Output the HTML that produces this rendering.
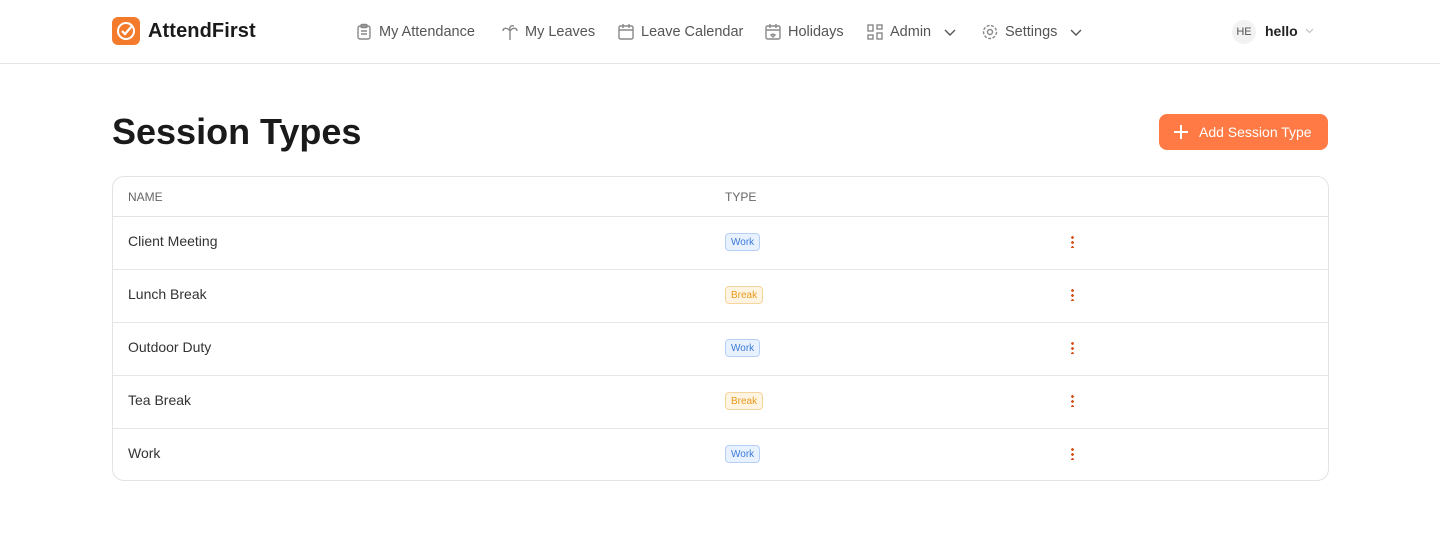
<!DOCTYPE html>
<html><head><style>
*{box-sizing:border-box;margin:0;padding:0}
body{width:1440px;height:550px;background:#fff;font-family:"Liberation Sans",sans-serif;color:#1f1f1f;overflow:hidden;position:relative}
.hdr{position:absolute;left:0;top:0;width:1440px;height:64px;border-bottom:1px solid #e5e5e5}
.logo{position:absolute;left:112px;top:17px;width:28px;height:28px;background:#f47b2c;border-radius:6px}
.brand{position:absolute;left:148px;top:20px;font-size:20px;font-weight:bold;color:#1a1a1a;letter-spacing:0.1px}
.nav{position:absolute;top:23px;font-size:14.5px;color:#555;display:flex;align-items:center;gap:6px}
.nav svg{width:18px;height:18px;fill:none;stroke:#888;stroke-width:1.4}
.av{position:absolute;left:1232px;top:20px;width:24px;height:24px;border-radius:12px;background:#f2f2f2;font-size:11px;color:#555;text-align:center;line-height:24px;font-weight:normal}
h1{position:absolute;left:112px;top:111px;font-size:36px;font-weight:bold;color:#1a1a1a}
.btn{position:absolute;left:1159px;top:114px;width:169px;height:36px;background:#ff7a45;border-radius:8px;color:#fff;font-size:14px;line-height:36px;padding-left:40px}
.btn:before{content:"";position:absolute;left:15px;top:17px;width:14px;height:1.6px;background:#fff}
.btn:after{content:"";position:absolute;left:21px;top:11px;width:1.6px;height:14px;background:#fff}
.tbl{position:absolute;left:112px;top:176px;width:1217px;height:305px;border:1px solid #e3e3e3;border-radius:12px;overflow:hidden}
.th{height:40px;border-bottom:1px solid #e3e3e3;font-size:12px;color:#666;position:relative}
.th span{position:absolute;top:13px}
.row{height:53px;border-bottom:1px solid #e6e6e6;position:relative;font-size:14px;color:#333}
.row:last-child{border-bottom:none}
.nm{position:absolute;left:15px;top:16px}
.b{position:absolute;left:612px;top:16px;height:18px;border-radius:4px;font-size:10px;display:flex;align-items:center;padding:0 5px}
.w{background:#e8f1ff;border:1px solid #b6d0f5;color:#3c7bd6}
.k{background:#fff4e2;border:1px solid #f5d59e;color:#e99a1d}
.dots{position:absolute;left:958px;top:18px;width:3px;height:13px;background:radial-gradient(circle,#d4541a 1.3px,transparent 1.5px) 0 0/3px 5px repeat-y}
</style></head><body>
<div class="hdr">
<div class="logo"><svg width="28" height="28" viewBox="0 0 28 28"><circle cx="14" cy="14" r="8" fill="none" stroke="#fff" stroke-width="2"/><path d="M10 14l3 3 7-8" fill="none" stroke="#fff" stroke-width="2.2"/></svg></div>
<div class="brand">AttendFirst</div>
<div class="nav" style="left:355px"><svg viewBox="0 0 18 18"><rect x="3" y="3" width="12" height="13" rx="2"/><rect x="6" y="1.5" width="6" height="3" rx="1"/><path d="M6 8h6M6 11h6"/></svg>My Attendance</div>
<div class="nav" style="left:501px"><svg viewBox="0 0 18 18"><path d="M9 8v9M9 8C6 4 2 5 2 8M9 8c3-4 7-3 7 0M9 8C8 4 10 2 13 3"/></svg>My Leaves</div>
<div class="nav" style="left:617px"><svg viewBox="0 0 18 18"><rect x="2" y="3" width="14" height="13" rx="1.5"/><path d="M2 7h14M6 1v4M12 1v4"/></svg>Leave Calendar</div>
<div class="nav" style="left:764px"><svg viewBox="0 0 18 18"><rect x="2" y="3" width="14" height="13" rx="1.5"/><path d="M2 7h14M6 1v4M12 1v4M9 14l-2-2 2-1 2 1z"/></svg>Holidays</div>
<div class="nav" style="left:866px"><svg viewBox="0 0 18 18"><rect x="2" y="2" width="5" height="6"/><rect x="11" y="2" width="5" height="4"/><rect x="2" y="12" width="5" height="4"/><rect x="11" y="10" width="5" height="6"/></svg>Admin <svg viewBox="0 0 18 18" style="stroke:#555;margin-left:4px"><path d="M4 7l5 5 5-5"/></svg></div>
<div class="nav" style="left:981px"><svg viewBox="0 0 18 18"><circle cx="9" cy="9" r="2.5"/><circle cx="9" cy="9" r="6.5" stroke-dasharray="3 1.5"/></svg>Settings <svg viewBox="0 0 18 18" style="stroke:#555;margin-left:4px"><path d="M4 7l5 5 5-5"/></svg></div>
<div class="av">HE</div>
<div style="position:absolute;left:1265px;top:23px;font-size:14px;font-weight:bold;color:#222">hello</div>
<svg style="position:absolute;left:1305px;top:28px" width="9" height="6"><path d="M1 1l3.5 3.5L8 1" fill="none" stroke="#bbb"/></svg>
</div>
<h1>Session Types</h1>
<div class="btn">Add Session Type</div>
<div class="tbl">
<div class="th"><span style="left:15px">NAME</span><span style="left:612px">TYPE</span></div>
<div class="row"><span class="nm">Client Meeting</span><span class="b w">Work</span><i class="dots"></i></div>
<div class="row"><span class="nm">Lunch Break</span><span class="b k">Break</span><i class="dots"></i></div>
<div class="row"><span class="nm">Outdoor Duty</span><span class="b w">Work</span><i class="dots"></i></div>
<div class="row"><span class="nm">Tea Break</span><span class="b k">Break</span><i class="dots"></i></div>
<div class="row"><span class="nm">Work</span><span class="b w">Work</span><i class="dots"></i></div>
</div>
</body></html>
